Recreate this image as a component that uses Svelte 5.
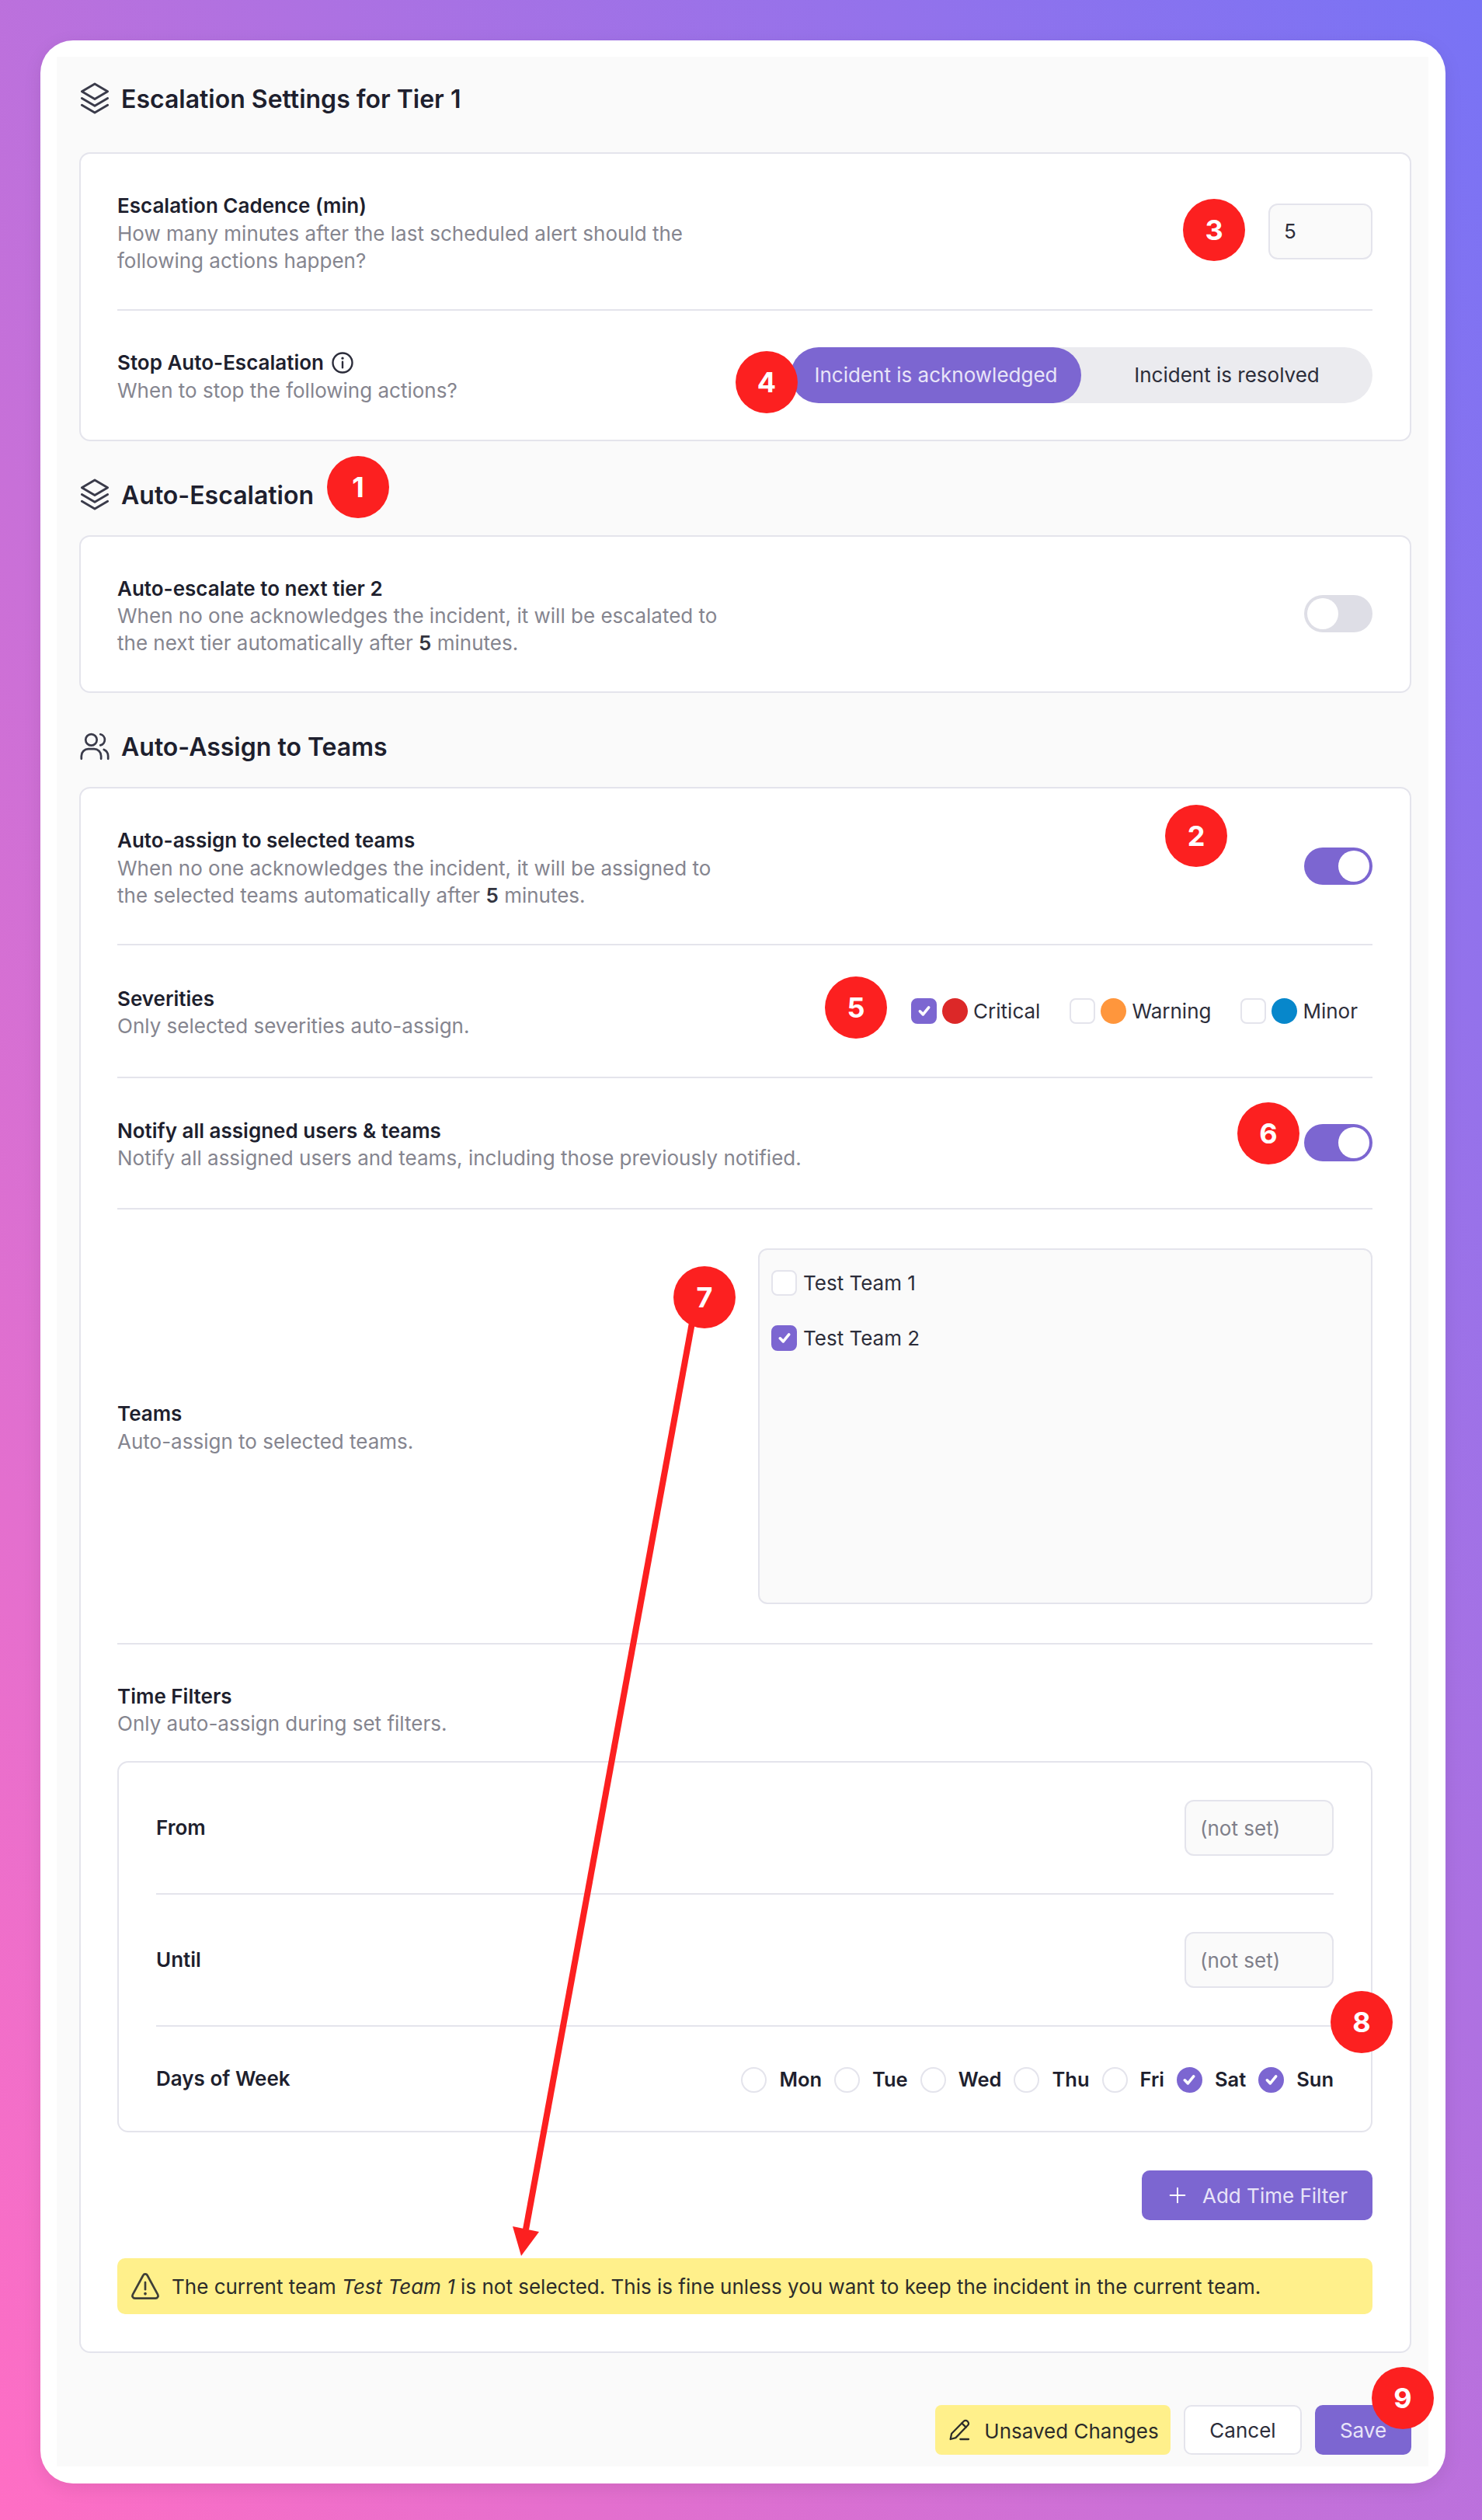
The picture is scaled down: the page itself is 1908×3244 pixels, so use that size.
<script>
  const badges = [
    { n: 1, x: 461, y: 627 }, { n: 2, x: 1540, y: 1076 }, { n: 3, x: 1563, y: 296 },
    { n: 4, x: 987, y: 492 }, { n: 5, x: 1102, y: 1297 }, { n: 6, x: 1633, y: 1459 },
    { n: 7, x: 907, y: 1670 }, { n: 8, x: 1753, y: 2603 }, { n: 9, x: 1806, y: 3087 }
  ];
  const days = [
    { d: 'Mon', on: false }, { d: 'Tue', on: false }, { d: 'Wed', on: false }, { d: 'Thu', on: false },
    { d: 'Fri', on: false }, { d: 'Sat', on: true }, { d: 'Sun', on: true }
  ];
  const sevs = [
    { s: 'Critical', c: '#dc2828', on: true }, { s: 'Warning', c: '#ff963c', on: false }, { s: 'Minor', c: '#0787cb', on: false }
  ];
</script>

{#snippet stack()}
  <svg class="hicon" viewBox="2.5 1.5 19 21" fill="none" stroke="#3a3b4a" stroke-width="1.5" stroke-linecap="round" stroke-linejoin="round">
    <path d="M12 2.5 20.5 7.5 12 12.5 3.5 7.5Z" /><path d="M3.5 12 12 17 20.5 12" /><path d="M3.5 16.5 12 21.5 20.5 16.5" />
  </svg>
{/snippet}

{#snippet check()}
  <svg viewBox="0 0 16 16" fill="none" stroke="#fff" stroke-width="2.2" stroke-linecap="round" stroke-linejoin="round"><path d="M4.5 8.5 7 11l4.5-5.5" /></svg>
{/snippet}

<div class="page">
  <div class="win">
    <div class="panel">
      <h2 class="head first">{@render stack()}Escalation Settings for Tier 1</h2>
      <section class="card">
        <div class="row">
          <div class="text">
            <div class="label">Escalation Cadence (min)</div>
            <div class="desc">How many minutes after the last scheduled alert should the following actions happen?</div>
          </div>
          <div class="input num">5</div>
        </div>
        <hr />
        <div class="row">
          <div class="text">
            <div class="label">Stop Auto-Escalation
              <svg class="info" viewBox="0 0 24 24" fill="none" stroke="#2b2c3a" stroke-width="1.9" stroke-linecap="round"><circle cx="12" cy="12" r="10" /><path d="M12 11v6" /><path d="M12 7.2v.1" stroke-width="2.6" /></svg>
            </div>
            <div class="desc">When to stop the following actions?</div>
          </div>
          <div class="seg">
            <div class="seg-on">Incident is acknowledged</div>
            <div class="seg-off">Incident is resolved</div>
          </div>
        </div>
      </section>

      <h2 class="head">{@render stack()}Auto-Escalation</h2>
      <section class="card">
        <div class="row">
          <div class="text">
            <div class="label">Auto-escalate to next tier 2</div>
            <div class="desc">When no one acknowledges the incident, it will be escalated to the next tier automatically after <b>5</b> minutes.</div>
          </div>
          <div class="toggle off"><span></span></div>
        </div>
      </section>

      <h2 class="head">
        <svg class="hicon" viewBox="1.5 2 21 20" fill="none" stroke="#3a3b4a" stroke-width="1.5" stroke-linecap="round" stroke-linejoin="round">
          <circle cx="9.5" cy="7.5" r="4" /><path d="M2.5 21v-2a5 5 0 0 1 5-5h4a5 5 0 0 1 5 5v2" /><path d="M16 3.6a4 4 0 0 1 0 7.8" /><path d="M21.5 21v-2a5 5 0 0 0-3-4.5" />
        </svg>Auto-Assign to Teams</h2>
      <section class="card">
        <div class="row">
          <div class="text">
            <div class="label">Auto-assign to selected teams</div>
            <div class="desc">When no one acknowledges the incident, it will be assigned to the selected teams automatically after <b>5</b> minutes.</div>
          </div>
          <div class="toggle"><span></span></div>
        </div>
        <hr />
        <div class="row tall">
          <div class="text">
            <div class="label">Severities</div>
            <div class="desc">Only selected severities auto-assign.</div>
          </div>
          <div class="sevs">
            {#each sevs as v}
              <div class="sev">
                <span class="cb" class:on={v.on}>{#if v.on}{@render check()}{/if}</span>
                <span class="dot" style:background={v.c}></span>
                <span class="sevname">{v.s}</span>
              </div>
            {/each}
          </div>
        </div>
        <hr />
        <div class="row notify">
          <div class="text wide">
            <div class="label">Notify all assigned users &amp; teams</div>
            <div class="desc">Notify all assigned users and teams, including those previously notified.</div>
          </div>
          <div class="toggle"><span></span></div>
        </div>
        <hr />
        <div class="row teams-row">
          <div class="text">
            <div class="label">Teams</div>
            <div class="desc">Auto-assign to selected teams.</div>
          </div>
          <div class="teams">
            <div class="team"><span class="cb"></span>Test Team 1</div>
            <div class="team"><span class="cb on">{@render check()}</span>Test Team 2</div>
          </div>
        </div>
        <hr />
        <div class="text">
          <div class="label">Time Filters</div>
          <div class="desc">Only auto-assign during set filters.</div>
        </div>
        <div class="filter">
          <div class="row">
            <div class="label">From</div>
            <div class="input unset">(not set)</div>
          </div>
          <hr />
          <div class="row">
            <div class="label">Until</div>
            <div class="input unset">(not set)</div>
          </div>
          <hr />
          <div class="row">
            <div class="label">Days of Week</div>
            <div class="days">
              {#each days as x}
                <span class="cb round" class:on={x.on}>{#if x.on}{@render check()}{/if}</span>
                <span class="day">{x.d}</span>
              {/each}
            </div>
          </div>
        </div>
        <div class="addrow">
          <button class="btn primary add">
            <svg viewBox="0 0 24 24" fill="none" stroke="#fff" stroke-width="1.7" stroke-linecap="round"><path d="M12 4v16M4 12h16" /></svg>
            Add Time Filter
          </button>
        </div>
        <div class="warn">
          <svg viewBox="0 0 24 24" fill="none" stroke="#3f3f38" stroke-width="1.6" stroke-linecap="round" stroke-linejoin="round"><path d="M10.4 3.6 2.3 18.5A2 2 0 0 0 4 21.4h16a2 2 0 0 0 1.7-2.9L13.6 3.6a1.8 1.8 0 0 0-3.2 0Z" /><path d="M12 9v5.5" /><path d="M12 17.8v.1" stroke-width="2.2" /></svg>
          <span>The current team <i>Test Team 1</i> is not selected. This is fine unless you want to keep the incident in the current team.</span>
        </div>
      </section>

      <div class="foot">
        <div class="unsaved">
          <svg viewBox="0 0 24 24" fill="none" stroke="#2c2c2a" stroke-width="1.7" stroke-linecap="round" stroke-linejoin="round"><path d="M3.5 21 4.6 15.6 16.4 3.6a2.4 2.4 0 0 1 3.4 0l.5.5a2.4 2.4 0 0 1 0 3.4L8.6 19.6Z" /><path d="M14.5 5.5l4 4" /><path d="M13 21h8" /></svg>
          <span class="ulabel">Unsaved Changes</span>
        </div>
        <button class="btn cancel">Cancel</button>
        <button class="btn primary save">Save</button>
      </div>
    </div>
  </div>

  <svg class="arrow" viewBox="0 0 1908 3244">
    <path d="M897 1670 677 2870" stroke="#fc2020" stroke-width="8" fill="none" />
    <path d="M671 2904 660 2866 694 2873Z" fill="#fc2020" />
  </svg>
  {#each badges as b}
    <div class="badge" style:left="{b.x - 40}px" style:top="{b.y - 40}px">{b.n}</div>
  {/each}
</div>

<style>
  :global(body) { margin: 0; }
  .page {
    position: relative;
    box-sizing: border-box;
    width: 1908px;
    height: 3244px;
    padding: 52px 47px 47px 52px;
    background: linear-gradient(to top right, #ff6ec4, #7873f5);
    font-family: Inter, "Noto Sans", sans-serif;
    color: #1e1f2e;
    overflow: hidden;
  }
  .win {
    box-sizing: border-box;
    height: 3145px;
    padding: 21px 22px 22px 21px;
    background: #fff;
    border-radius: 42px;
    box-shadow: 0 6px 24px rgba(0, 0, 0, 0.08);
  }
  .panel {
    box-sizing: border-box;
    height: 3102px;
    padding: 34px 22px 0 29px;
    background: #fafafa;
  }
  .head {
    box-sizing: border-box;
    display: flex;
    align-items: center;
    gap: 16px;
    height: 40px;
    padding-top: 2px;
    margin: 49px 0 32px;
    font-size: 32px;
    font-weight: 600;
    line-height: 38px;
    color: #1e1f2e;
  }
  .head.first { margin: 0 0 49px; }
  .hicon { width: 38px; height: 41px; flex: none; margin-top: -3px; margin-left: 1px; margin-right: -1px; }
  .card {
    padding: 47px 48px 47px 47px;
    background: #fff;
    border: 2px solid #e4e4ec;
    border-radius: 14px;
  }
  .row { display: flex; align-items: center; justify-content: space-between; }
  .tall { min-height: 75px; }
  .notify { min-height: 73px; }
  .text { max-width: 800px; padding-top: 2px; margin-bottom: -2px; }
  .text.wide { max-width: none; }
  .label { font-size: 26px; font-weight: 600; line-height: 35.5px; color: #1e1f2e; }
  .desc { font-size: 26px; line-height: 35px; color: #85858f; }
  .desc b { font-weight: 600; color: #33343f; }
  .info { width: 30px; height: 30px; margin-left: 2px; vertical-align: -6px; }
  hr { margin: 47px 0; border: 0; border-top: 2px solid #e4e4ec; }
  .input {
    box-sizing: border-box;
    height: 72px;
    padding: 0 18px;
    display: flex;
    align-items: center;
    background: #fafafa;
    border: 2px solid #e4e4ec;
    border-radius: 12px;
    font-size: 26px;
  }
  .num { width: 134px; color: #2c2d3a; }
  .unset { width: 192px; color: #7f7f8a; }
  .seg { display: flex; width: 749px; height: 72px; background: #ebebef; border-radius: 36px; font-size: 26px; }
  .seg-on {
    width: 374px; display: flex; align-items: center; justify-content: center;
    background: #7c66d1; color: #e8e4f8; border-radius: 36px;
  }
  .seg-off { flex: 1; display: flex; align-items: center; justify-content: center; color: #2c2d3a; }
  .toggle {
    box-sizing: border-box;
    width: 88px; height: 48px; padding: 4px; flex: none;
    display: flex; justify-content: flex-end;
    background: #7c66d1; border-radius: 24px;
  }
  .toggle span { width: 40px; height: 40px; background: #fff; border-radius: 50%; }
  .toggle.off { justify-content: flex-start; background: #dedee6; }
  .cb {
    box-sizing: border-box;
    width: 33px; height: 33px; flex: none;
    display: inline-flex; align-items: center; justify-content: center;
    background: #fff; border: 2px solid #e4e4ec; border-radius: 8px;
  }
  .cb.on { background: #7c66d1; border-color: #7c66d1; }
  .cb :global(svg) { width: 26px; height: 26px; }
  .cb.round { border-radius: 50%; }
  .sevs { display: flex; gap: 38px; margin-right: 19px; font-size: 26px; }
  .sev { display: flex; align-items: center; }
  .dot { width: 33px; height: 33px; margin: 0 7px; border-radius: 50%; }
  .sevname { color: #2c2d3a; }
  .teams {
    box-sizing: border-box;
    width: 791px; height: 458px; padding: 26px 15px;
    display: flex; flex-direction: column; gap: 38px;
    background: #fafafa; border: 2px solid #e4e4ec; border-radius: 12px;
    align-self: stretch;
  }
  .teams-row { margin: 50px 0; }
  .team { display: flex; align-items: center; gap: 8px; height: 33px; font-size: 26px; color: #2c2d3a; }
  .filter { margin-top: 33px; padding: 48px; border: 2px solid #e4e4ec; border-radius: 14px; }
  .filter hr { margin: 48px 0; }
  .days { display: flex; align-items: center; gap: 16px; padding-top: 2px; font-size: 25.5px; font-weight: 600; line-height: 36px; }
  .addrow { display: flex; justify-content: flex-end; margin: 49px 0 49px; }
  .btn {
    box-sizing: border-box;
    height: 64px;
    display: inline-flex; align-items: center; justify-content: center;
    border-radius: 10px;
    font-family: inherit;
    font-size: 26px;
    border: 0;
  }
  .primary { background: #7c66d1; color: #e8e4f8; }
  .add { width: 297px; gap: 18px; }
  .add svg { width: 28px; height: 28px; }
  .warn {
    display: flex; align-items: center; gap: 14px;
    box-sizing: border-box;
    height: 72px; padding: 0 16px; margin-bottom: 1px;
    background: #fff08b; border-radius: 10px;
    font-size: 26px; color: #2c2c2a;
  }
  .warn svg { width: 40px; height: 40px; flex: none; }
  .foot { display: flex; justify-content: flex-end; align-items: center; gap: 17px; margin-top: 67px; }
  .unsaved {
    box-sizing: border-box;
    width: 303px; height: 64px;
    display: flex; align-items: center; justify-content: center; gap: 14px;
    background: #fff08b; border-radius: 8px; font-size: 26px; color: #2c2c2a;
  }
  .ulabel { position: relative; top: 1px; margin-left: 2px; }
  .unsaved svg { width: 32px; height: 32px; flex: none; }
  .cancel { width: 152px; background: #fff; border: 2px solid #e4e4ec; color: #2c2d3a; }
  .save { width: 124px; }
  .arrow { position: absolute; left: 0; top: 0; width: 1908px; height: 3244px; pointer-events: none; }
  .badge {
    position: absolute;
    width: 80px; height: 80px;
    display: flex; align-items: center; justify-content: center;
    background: #fc2020; color: #fff;
    border-radius: 50%;
    font-size: 36px; font-weight: 700;
  }
</style>
